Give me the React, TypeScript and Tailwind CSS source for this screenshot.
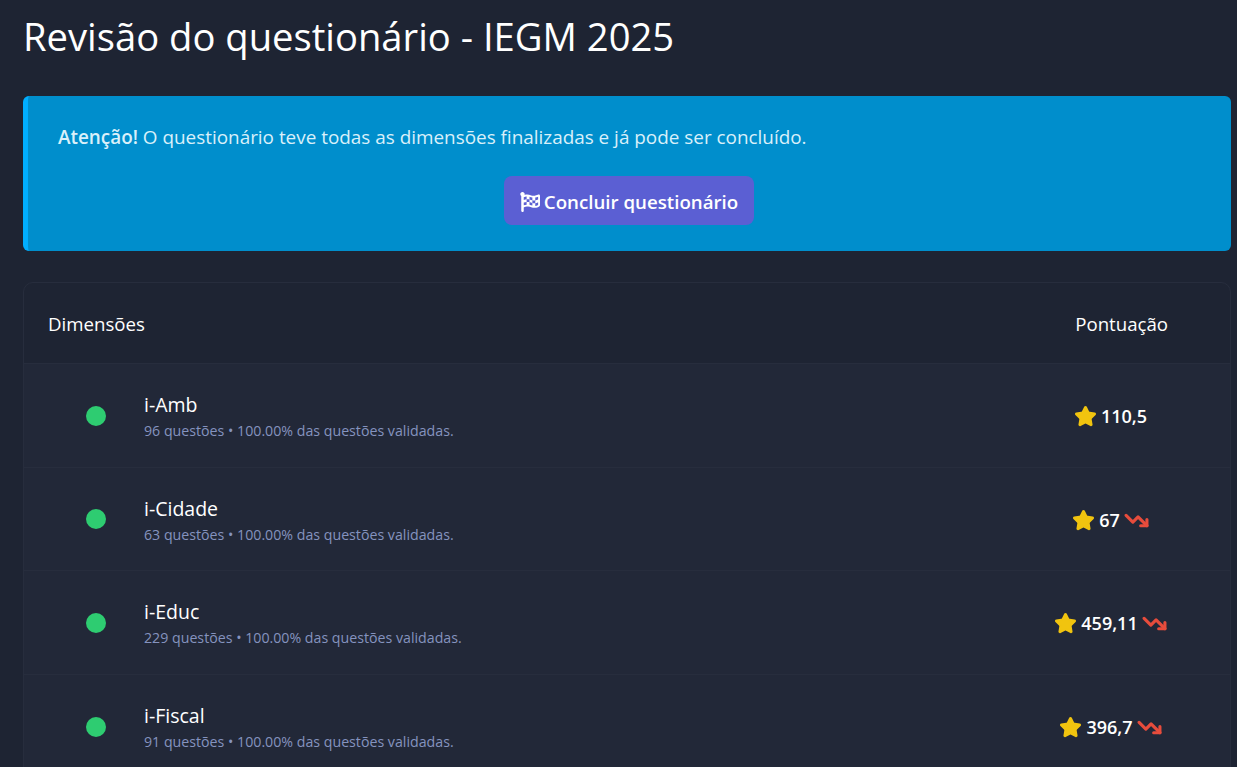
import { Star, TrendingDown } from "lucide-react";
import { FaFlagCheckered } from "react-icons/fa";

interface Dimension {
  name: string;
  detail: string;
  score: string;
  falling: boolean;
}

const dimensions: Dimension[] = [
  { name: "i-Amb", detail: "96 questões • 100.00% das questões validadas.", score: "110,5", falling: false },
  { name: "i-Cidade", detail: "63 questões • 100.00% das questões validadas.", score: "67", falling: true },
  { name: "i-Educ", detail: "229 questões • 100.00% das questões validadas.", score: "459,11", falling: true },
  { name: "i-Fiscal", detail: "91 questões • 100.00% das questões validadas.", score: "396,7", falling: true },
];

function DimensionRow({ item }: { item: Dimension }) {
  return (
    <div className="flex h-[103.5px] items-center border-b border-[#272d3d] bg-[#222838] last:border-b-0">
      <div className="flex w-[120px] shrink-0 justify-center pl-[23px] pt-px">
        <span className="h-5 w-5 rounded-full bg-[#2ecc71]" />
      </div>
      <div className="min-w-0 flex-1 pt-[3px]">
        <p className="text-[19.5px] leading-[26px] text-white">{item.name}</p>
        <p className="mt-[3px] text-[14.2px] leading-[20px] text-[#8593bf]">{item.detail}</p>
      </div>
      <div className="flex w-[218px] shrink-0 items-center justify-center gap-[4px] pr-[21px] pt-[3px] text-[18px] font-semibold text-white">
        <Star size={23} strokeWidth={2} className="fill-[#f1c40f] text-[#f1c40f]" />
        <span>{item.score}</span>
        {item.falling && <TrendingDown size={25} strokeWidth={3} className="text-[#e74c3c]" />}
      </div>
    </div>
  );
}

export default function App() {
  return (
    <div className="h-[767px] overflow-hidden bg-[#1e2433] pl-[23px] pr-[6px] font-['Open_Sans',sans-serif] text-white">
      <h1 className="h-[96px] pt-[10px] text-[38.2px] leading-[52px] font-normal">
        Revisão do questionário - IEGM 2025
      </h1>

      <div className="h-[155px] rounded-[6px] border-l-[5px] border-[#00aeff] bg-[#008ecc] pl-[30px] pt-[28px]">
        <p className="text-[18.9px] leading-[27px] text-[#d9f0fa]">
          <strong className="font-semibold">Atenção!</strong> O questionário teve todas as dimensões finalizadas e já pode ser concluído.
        </p>
        <div className="mt-[25px] flex justify-center pr-[31px]">
          <button
            type="button"
            className="flex h-[49px] w-[250px] items-center justify-center gap-1 rounded-[8px] bg-[#5b5fd3] pt-[3px] text-[18.7px] font-semibold text-white"
          >
            <FaFlagCheckered size={20} />
            Concluir questionário
          </button>
        </div>
      </div>

      <div className="mt-[31px] overflow-hidden rounded-t-[10px] border border-[#272d3d]">
        <div className="flex h-[80px] items-center justify-between pl-[24px] pr-[62px] pt-[1px] text-[18.65px]">
          <span>Dimensões</span>
          <span>Pontuação</span>
        </div>
        <div className="border-t border-[#272d3d]">
          {dimensions.map((item) => (
            <DimensionRow key={item.name} item={item} />
          ))}
        </div>
      </div>
    </div>
  );
}
